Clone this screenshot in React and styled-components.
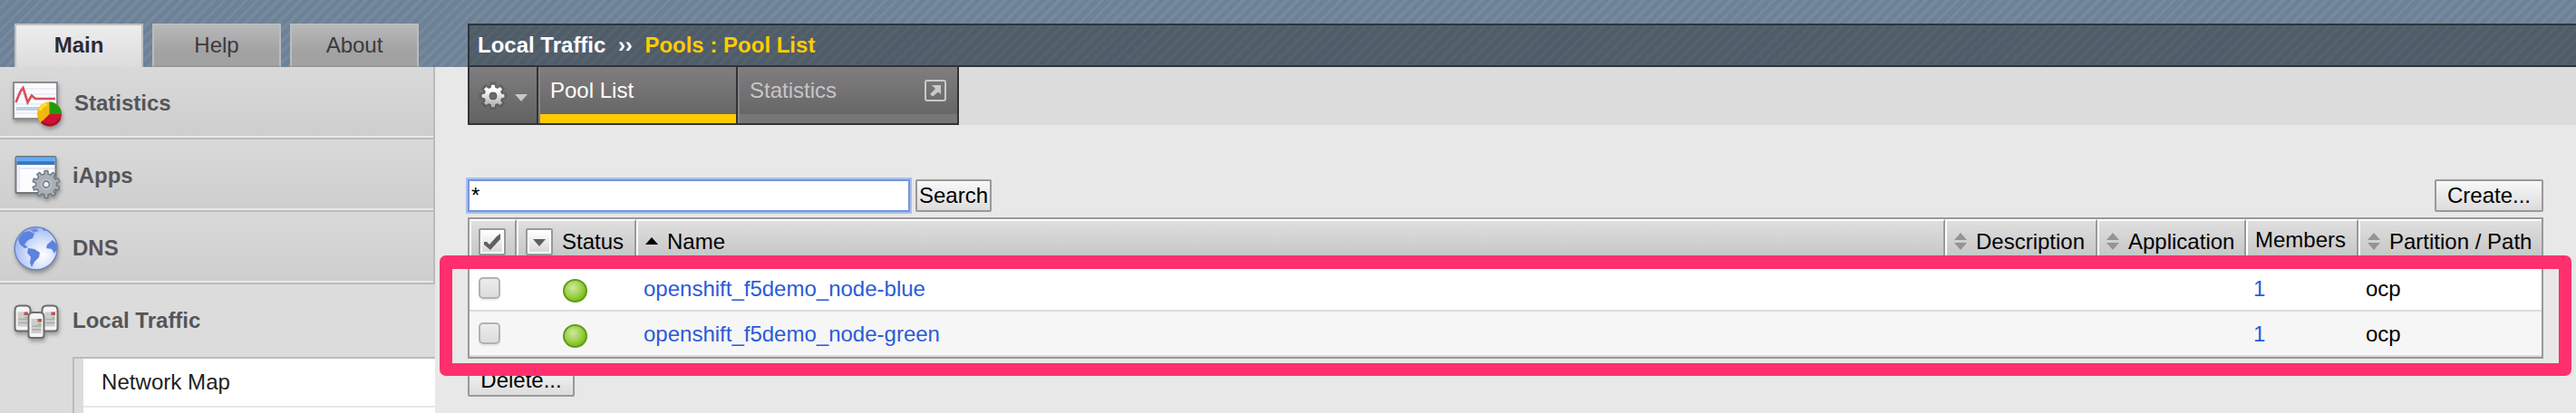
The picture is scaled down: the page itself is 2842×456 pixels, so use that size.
import React from "react";
import styled, { createGlobalStyle, css } from "styled-components";

const GlobalStyle = createGlobalStyle`
  *, *::before, *::after { box-sizing: border-box; }
  body { margin: 0; background: #e8e8e8; }
`;

const stripes = (base, line) => css`
  background: repeating-linear-gradient(135deg, ${base} 0 5.07px, ${line} 5.07px 8.45px);
`;

const Page = styled.div`
  width: 100%;
  height: 456px;
  overflow: hidden;
  font: 24px/28px "Liberation Sans", Arial, sans-serif;
  color: #000;
  background: #e8e8e8;
`;

const Band = styled.header`
  display: flex;
  height: 74px;
  padding-top: 26px;
  ${stripes("#6d8299", "#768a9b")}
`;

const SideTabs = styled.nav`
  display: flex;
  flex: none;
  gap: 10px;
  width: 516px;
  padding-left: 16px;
`;

const SideTab = styled.a`
  width: 142px;
  height: 48px;
  border: 2px solid ${(p) => (p.$active ? "#c0c0c0" : "#b9bdc1")};
  border-bottom: ${(p) => (p.$active ? "0" : "2px solid #999")};
  padding-bottom: ${(p) => (p.$active ? "2px" : "0")};
  line-height: 44px;
  text-align: center;
  font-weight: ${(p) => (p.$active ? "bold" : "normal")};
  color: ${(p) => (p.$active ? "#2b2b33" : "#3a3a3e")};
  background: ${(p) =>
    p.$active
      ? "linear-gradient(#ededed, #dcdcdc)"
      : "linear-gradient(#b8b8b8, #a2a2a2 65%)"};
`;

const Crumb = styled.div`
  display: flex;
  flex: 1;
  border: 2px solid #2f3338;
  border-right: 0;
  padding-left: 9px;
  line-height: 44px;
  font-weight: bold;
  color: #fff;
  ${stripes("#4f5c69", "#55616b")}
`;

const CrumbSep = styled.span`
  width: 43px;
  text-align: center;
`;

const CrumbCurrent = styled.span`
  color: #fc0;
`;

const Body = styled.div`
  display: flex;
  height: 382px;
`;

const Sidebar = styled.aside`
  flex: none;
  width: 480px;
  background: #dcdcdc;
`;

const SideItem = styled.a`
  display: flex;
  height: 80px;
  padding: 10px 0 0 12px;
  font-weight: bold;
  line-height: 60px;
  color: #55555a;
  ${(p) =>
    !p.$open &&
    css`
      background: linear-gradient(#d9d9d9, #cecece);
      border-right: 2px solid #bbb;
      border-bottom: 2px solid #bbb;
      box-shadow: inset 0 -2px #e8e8e8;
    `}
`;

const SideIcon = styled.svg`
  flex: none;
  width: 60px;
  height: 60px;
  margin-right: ${(p) => p.$gap}px;
  filter: drop-shadow(1px 3px 2px rgba(0, 0, 0, 0.3));
`;

const SubMenu = styled.div`
  margin-left: 80px;
  padding-left: 10px;
  border-top: 2px solid #bbb;
  border-left: 2px solid #bbb;
`;

const SubItem = styled.a`
  display: block;
  height: 54px;
  padding-left: 20px;
  line-height: 52px;
  letter-spacing: 0.05px;
  color: #222;
  background: #fff;
  border-bottom: 2px solid #e8e8e8;
`;

const Main = styled.main`
  flex: 1;
  min-width: 0;
  padding-left: 36px;
`;

const TabStrip = styled.div`
  display: flex;
  height: 64px;
  background: linear-gradient(#dcdcdc, #dcdcdc);
`;

const tabFace = css`
  height: 64px;
  color: #fff;
  background: linear-gradient(#807d80, #686868 80%, #626262);
  border-bottom: 2px solid #333;
  border-right: 2px solid #333;
`;

const GearMenu = styled.button`
  ${tabFace}
  width: 78px;
  padding: 0;
  border-top: 0;
  border-left: 2px solid #333;
`;

const GearDrawing = styled.svg`
  display: block;
  width: 74px;
  height: 62px;
`;

const PageTab = styled.a`
  ${tabFace}
  display: flex;
  justify-content: space-between;
  width: ${(p) => p.$width}px;
  padding: 8px 12px 0 13px;
  line-height: 36px;
  color: ${(p) => (p.$active ? "#fff" : "#c6c6c6")};
  box-shadow: inset 2px 0 #848484, inset 0 -10px ${(p) => (p.$active ? "#fc0" : "#777")};
`;

const PopOut = styled.svg`
  width: 24px;
  height: 24px;
  margin-top: 6px;
`;

const Toolbar = styled.div`
  display: flex;
  height: 36px;
  width: 2290px;
  margin: 60px 0 6px;
`;

const SearchInput = styled.input`
  width: 488px;
  height: 36px;
  margin: 0 6px 0 0;
  padding: 0 2px;
  border: 2px solid #7795dc;
  outline: 0;
  box-shadow: 0 0 0 2px #a9bff0;
  background: #fff;
  font: inherit;
  color: #000;
`;

const Button = styled.button`
  width: ${(p) => p.$width}px;
  height: 36px;
  padding: 0;
  margin-left: ${(p) => (p.$end ? "auto" : "0")};
  border: 2px solid #999;
  border-radius: 2px;
  background: linear-gradient(#f8f8f8, #dcdcdc);
  font: inherit;
  line-height: 32px;
  color: #000;
  white-space: nowrap;
`;

const TableArea = styled.section`
  position: relative;
  width: 2290px;
`;

const Table = styled.div`
  border: 2px solid #999;
  margin-bottom: 6px;
`;

const columns = css`
  display: grid;
  grid-template-columns: 52px 132px 1fr 168px 164px 124px 202px;
`;

const HeaderRow = styled.div`
  ${columns}
  height: 52px;
  background: linear-gradient(#e0e0e0, #c0c0c0);
`;

const HeaderCell = styled.div`
  display: flex;
  align-items: center;
  gap: ${(p) => p.$gap || 0}px;
  padding: 0 0 ${(p) => (p.$raised ? 8 : 4)}px ${(p) => p.$pad}px;
  border-top: 2px solid #fff;
  border-left: 2px solid #fff;
  border-right: 2px solid #999;
  white-space: nowrap;
  &:last-child { border-right: 0; }
`;

const HeaderButton = styled.svg`
  flex: none;
  width: 30px;
  height: 30px;
`;

const SortIcon = styled.svg`
  flex: none;
  width: 14px;
  height: 20px;
`;

const Row = styled.div`
  ${columns}
  height: 50px;
  border-bottom: 2px solid #dcdcdc;
  background: ${(p) => p.$bg};
`;

const Cell = styled.div`
  padding: 2px 0 0 8px;
  line-height: 46px;
  white-space: nowrap;
`;

const CheckCell = styled.div`
  padding: 12px 0 0 10px;
`;

const CheckBox = styled.div`
  width: 24px;
  height: 24px;
  border: 2px solid #b2b2b2;
  border-radius: 5px;
  background: linear-gradient(#ececec, #dcdcdc);
  box-shadow: 0 2px 1px rgba(0, 0, 0, 0.07);
`;

const StatusCell = styled.div`
  padding: 14px 0 0 51px;
`;

const StatusDot = styled.div`
  width: 27px;
  height: 26px;
  border: 2px solid #5f9c1c;
  border-radius: 50%;
  background: radial-gradient(circle at 40% 35%, #cfe9a0, #9bcf45 50%, #72b90e 80%);
`;

const Link = styled.a`
  color: #2b5bd7;
`;

const Highlight = styled.div`
  position: absolute;
  left: -31px;
  top: 42px;
  width: 2352px;
  height: 133px;
  border: 14px solid #ff2f6d;
  border-top-width: 15px;
  border-radius: 7px;
  pointer-events: none;
`;

function gearPath(cx, cy, outer, inner, teeth) {
  const pts = [];
  const step = (Math.PI * 2) / teeth;
  for (let i = 0; i < teeth; i++) {
    const a = i * step - Math.PI / 2;
    [
      [-0.3, inner],
      [-0.19, outer],
      [0.19, outer],
      [0.3, inner],
    ].forEach(([f, r]) => {
      pts.push(
        `${(cx + r * Math.cos(a + f * step)).toFixed(2)} ${(cy + r * Math.sin(a + f * step)).toFixed(2)}`
      );
    });
  }
  return `M${pts.join("L")}Z`;
}

const StatisticsIcon = () => (
  <SideIcon $gap={10} viewBox="0 0 60 60">
    <rect x="3" y="7" width="48" height="40" fill="#fbfbfd" stroke="#8c8c8c" strokeWidth="2" />
    <path d="M5 14H50M5 20H50M5 31H50M5 41H50" stroke="#e6eaf4" strokeWidth="1.5" />
    <rect x="6" y="34" width="26" height="4" fill="#b9d0e6" />
    <path d="M5.500 29L10.500 17L13.500 13L18.500 29L23 21.500L27 25H49" fill="none" stroke="#d6505e" strokeWidth="2.600" />
    <circle cx="42.500" cy="42" r="13.500" fill="#f2b90c" />
    <path d="M42.500 42V28.500A13.500 13.500 0 0 1 56 42Z" fill="#219a0c" />
    <path d="M42.500 42H56A13.500 13.500 0 0 1 33 51.500Z" fill="#cf1232" />
    <path d="M34 50A12 12 0 0 0 54 47" fill="none" stroke="#a30d2b" strokeWidth="2" />
    <path d="M32 38A11 11 0 0 1 40 31" fill="none" stroke="#ffdf3c" strokeWidth="3" />
  </SideIcon>
);

const IAppsIcon = () => (
  <SideIcon $gap={8} viewBox="0 0 60 60">
    <rect x="5.500" y="9" width="44" height="40" rx="1.500" fill="#fcfcff" stroke="#74777d" strokeWidth="2" />
    <path d="M9 19V47M8 22H48" stroke="#e9e6f4" strokeWidth="2" />
    <rect x="6.500" y="9.500" width="42" height="4.500" fill="#62abf5" />
    <rect x="6.500" y="14" width="42" height="4" fill="#3a78c0" />
    <path d={gearPath(39, 39.5, 15, 11.5, 10)} fill="#a8b1b7" stroke="#737b81" strokeWidth="1.500" />
    <circle cx="39" cy="39.500" r="6" fill="#bcc4c8" />
    <circle cx="39" cy="39.500" r="3.500" fill="#eef0f4" stroke="#7b8389" strokeWidth="1.800" />
  </SideIcon>
);

const GlobeIcon = () => (
  <SideIcon $gap={8} viewBox="0 0 60 60">
    <defs>
      <radialGradient id="sea" cx="0.65" cy="0.65" r="0.75">
        <stop offset="0" stopColor="#fff" />
        <stop offset="0.45" stopColor="#d5e0fc" />
        <stop offset="1" stopColor="#93b0f2" />
      </radialGradient>
    </defs>
    <circle cx="27.700" cy="30.300" r="23.500" fill="url(#sea)" stroke="#6d85c0" strokeWidth="1.500" />
    <path d="M8 20L13 13L20 11L26 14L24 19L19 21L15 26L19 29L15 30L10 26Z" fill="#5c83dc" />
    <path d="M19 30L26 31L32 35L31 40L26 45L23 51L21 46L22 40L18 35Z" fill="#5c83dc" />
    <path d="M40 26L46 21L50 25L51 31L48 36L45 31L39 30Z" fill="#5c83dc" />
    <path d="M21 9L28 8L31 11L25 13ZM34 8L41 11L36 11Z" fill="#6f92e2" />
  </SideIcon>
);

const Server = ({ x, y }) => (
  <g transform={`translate(${x} ${y})`}>
    <path d="M1 6Q1 1 6 1H13Q18 1 18 6V26Q18 29 15 29H4Q1 29 1 26Z" fill="#f4f4f4" stroke="#6c6c6c" strokeWidth="2" />
    <path d="M4 8H15V24H4Z" fill="#cdcdcd" />
    <path d="M5 16H15M5 20H15" stroke="#aaa" strokeWidth="1.500" />
    <rect x="11" y="8" width="4.500" height="3.500" fill="#c4505a" />
    <rect x="12" y="13" width="3" height="2" fill="#8ecb82" />
  </g>
);

const ServersIcon = () => (
  <SideIcon $gap={8} viewBox="0 0 60 60">
    <Server x={3.5} y={12.5} />
    <Server x={33.5} y={12.5} />
    <Server x={18.5} y={20} />
  </SideIcon>
);

const GearMenuIcon = () => (
  <GearDrawing viewBox="0 0 74 62">
    <defs>
      <linearGradient id="steel" x1="0" y1="0" x2="0" y2="1">
        <stop offset="0.2" stopColor="#fff" />
        <stop offset="1" stopColor="#aaa" />
      </linearGradient>
    </defs>
    <path d={gearPath(26, 32, 14, 10.5, 8)} fill="none" stroke="#555" strokeWidth="3" opacity="0.55" />
    <path d={gearPath(26, 32, 12.5, 9.5, 8)} fill="url(#steel)" />
    <circle cx="26" cy="32" r="4" fill="#6a6a6a" stroke="#555" strokeWidth="1" />
    <path d="M50 30H64L57 38Z" fill="#c8c8c8" />
  </GearDrawing>
);

const PopOutIcon = () => (
  <PopOut viewBox="0 0 24 24">
    <rect x="1" y="1" width="22" height="22" rx="2" fill="none" stroke="#c9c9c9" strokeWidth="2" />
    <path d="M8 6H18V16L15 13.500L9 18.500L6 16L12 10Z" fill="#c9c9c9" />
  </PopOut>
);

const ButtonFrame = () => (
  <>
    <defs>
      <linearGradient id="face" x1="0" y1="0" x2="0" y2="1">
        <stop offset="0" stopColor="#fff" />
        <stop offset="1" stopColor="#d8d8d8" />
      </linearGradient>
    </defs>
    <rect x="1" y="1" width="28" height="28" rx="1" fill="#fff" stroke="#999" strokeWidth="2" />
    <rect x="4" y="4" width="22" height="22" fill="url(#face)" />
  </>
);

const CheckAll = () => (
  <HeaderButton viewBox="0 0 30 30">
    <ButtonFrame />
    <path d="M6 15H9L12 18L20 9L24 6V12L13 24L6 18Z" fill="#606060" />
  </HeaderButton>
);

const StatusFilter = () => (
  <HeaderButton viewBox="0 0 30 30">
    <ButtonFrame />
    <path d="M8 12H22L15 20Z" fill="#606060" />
  </HeaderButton>
);

const SortBoth = () => (
  <SortIcon viewBox="0 0 14 20">
    <path d="M7 0L14 8H0ZM0 11H14L7 19Z" fill="#949494" />
  </SortIcon>
);

const SortAscending = () => (
  <SortIcon viewBox="0 0 14 20">
    <path d="M7 5L14 13H0Z" fill="#000" />
  </SortIcon>
);

const pools = [
  { name: "openshift_f5demo_node-blue", members: 1, partition: "ocp", bg: "#fff" },
  { name: "openshift_f5demo_node-green", members: 1, partition: "ocp", bg: "#f6f6f6" },
];

export default function App() {
  return (
    <Page>
      <GlobalStyle />
      <Band>
        <SideTabs>
          <SideTab $active>Main</SideTab>
          <SideTab>Help</SideTab>
          <SideTab>About</SideTab>
        </SideTabs>
        <Crumb>
          <span>Local Traffic</span>
          <CrumbSep>››</CrumbSep>
          <CrumbCurrent>Pools : Pool List</CrumbCurrent>
        </Crumb>
      </Band>
      <Body>
        <Sidebar>
          <SideItem><StatisticsIcon />Statistics</SideItem>
          <SideItem><IAppsIcon />iApps</SideItem>
          <SideItem><GlobeIcon />DNS</SideItem>
          <SideItem $open><ServersIcon />Local Traffic</SideItem>
          <SubMenu>
            <SubItem>Network Map</SubItem>
            <SubItem />
          </SubMenu>
        </Sidebar>
        <Main>
          <TabStrip>
            <GearMenu><GearMenuIcon /></GearMenu>
            <PageTab $active $width={220}>Pool List</PageTab>
            <PageTab $width={244}>Statistics<PopOutIcon /></PageTab>
          </TabStrip>
          <Toolbar>
            <SearchInput defaultValue="*" />
            <Button $width={84}>Search</Button>
            <Button $width={120} $end>Create...</Button>
          </Toolbar>
          <TableArea>
            <Table>
              <HeaderRow>
                <HeaderCell $pad={8}><CheckAll /></HeaderCell>
                <HeaderCell $pad={8} $gap={10}><StatusFilter />Status</HeaderCell>
                <HeaderCell $pad={8} $gap={10}><SortAscending />Name</HeaderCell>
                <HeaderCell $pad={8} $gap={10}><SortBoth />Description</HeaderCell>
                <HeaderCell $pad={8} $gap={10}><SortBoth />Application</HeaderCell>
                <HeaderCell $pad={8} $raised>Members</HeaderCell>
                <HeaderCell $pad={8} $gap={10}><SortBoth />Partition / Path</HeaderCell>
              </HeaderRow>
              {pools.map((pool) => (
                <Row key={pool.name} $bg={pool.bg}>
                  <CheckCell><CheckBox /></CheckCell>
                  <StatusCell><StatusDot /></StatusCell>
                  <Cell><Link>{pool.name}</Link></Cell>
                  <Cell />
                  <Cell />
                  <Cell><Link>{pool.members}</Link></Cell>
                  <Cell>{pool.partition}</Cell>
                </Row>
              ))}
            </Table>
            <Button $width={118}>Delete...</Button>
            <Highlight />
          </TableArea>
        </Main>
      </Body>
    </Page>
  );
}
